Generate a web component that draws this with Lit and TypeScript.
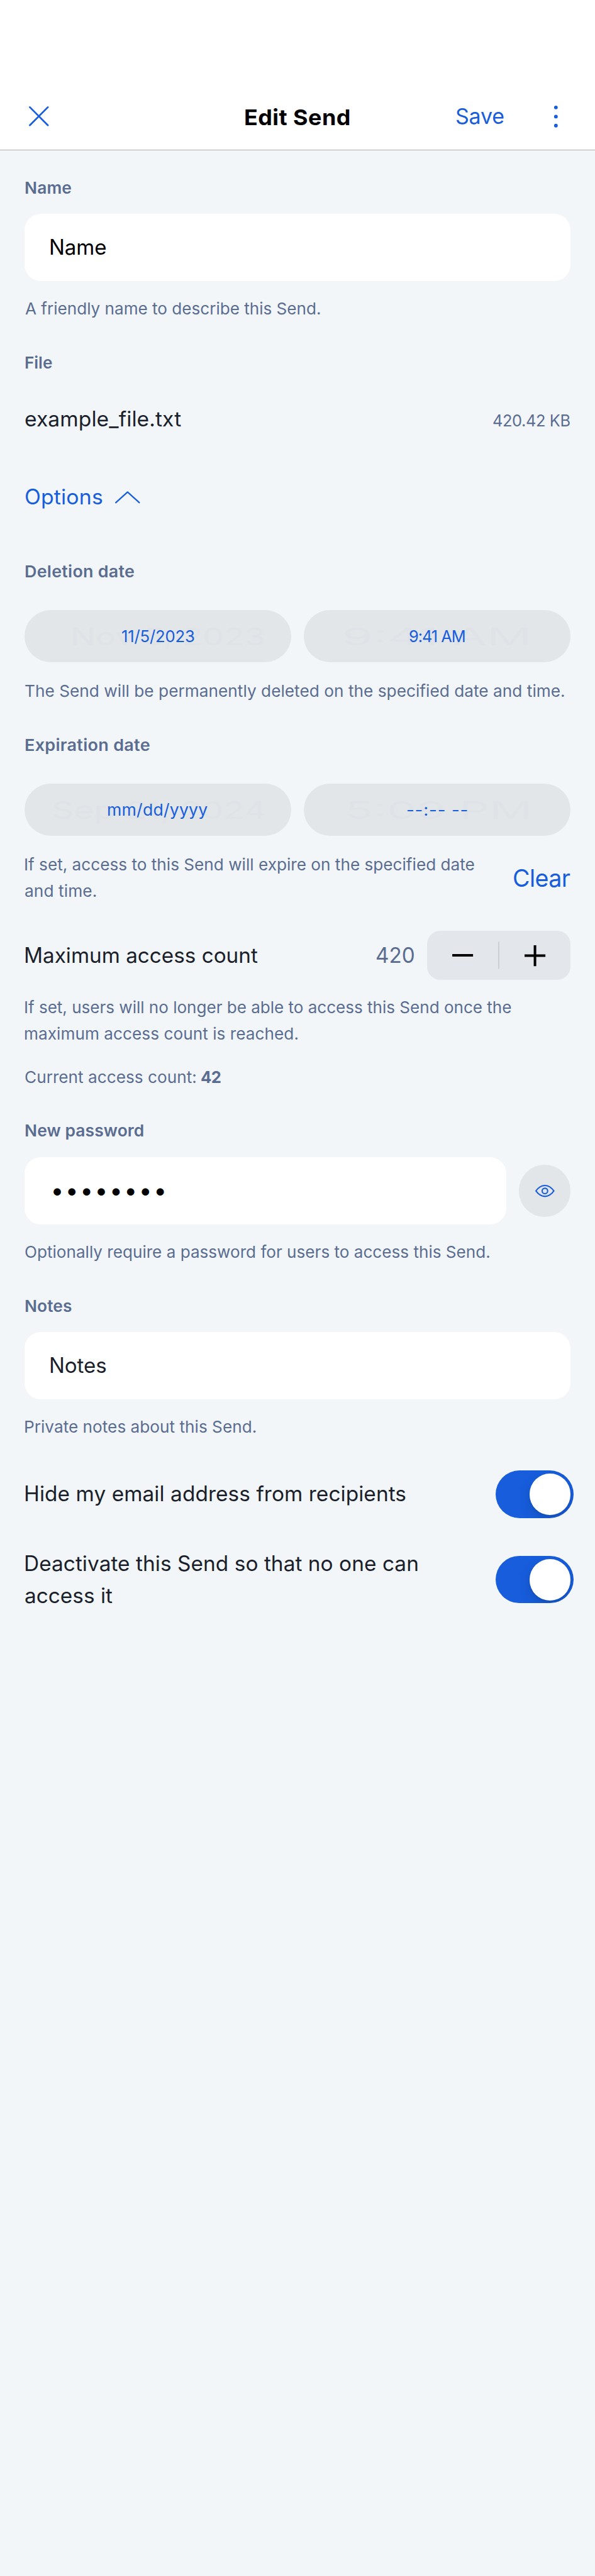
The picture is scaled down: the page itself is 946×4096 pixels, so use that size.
import { LitElement, html, css, svg, unsafeCSS } from "lit";
import { customElement, property } from "lit/decorators.js";
import { styleMap } from "lit/directives/style-map.js";

// Design units (1170 wide artboard) to CSS pixels.
const S = 946 / 1170;
const u = (n: number) => unsafeCSS(`${(n * S).toFixed(3)}px`);
const FAMILY = 'Inter, "Open Sans", sans-serif';
const SMALL = 32.4;
const BODY = 41.2;
const ctx = document.createElement("canvas").getContext("2d")!;

/** One line of text whose visible ink spans exactly `w` design units. */
@customElement("fit-text")
class FitText extends LitElement {
  @property() text = "";
  @property({ type: Number }) w = 100;
  @property({ type: Number }) size = SMALL;
  @property({ type: Number }) weight = 400;
  @property({ type: Boolean }) stretch = false;

  static styles = css`
    :host { display: block; flex: none; white-space: pre; }
    .box { display: flex; }
    .ink { display: block; flex: none; transform-origin: 0 50%; font-family: ${unsafeCSS(FAMILY)}; font-kerning: normal; }
  `;

  render() {
    const fs = this.size * S;
    ctx.font = `${this.weight} ${fs}px ${FAMILY}`;
    const m = ctx.measureText(this.text);
    const ink = m.actualBoundingBoxLeft + m.actualBoundingBoxRight;
    const target = this.w * S;
    const ratio = target / ink;
    // Widen the letters a little, and let the tracking take up the rest.
    let k = Math.min(1.06, Math.max(0.97, Math.pow(ratio, 0.6)));
    if (this.stretch) k = ratio;
    if (this.text.startsWith("•")) k = 1;
    const gap = (target / k - ink) / Math.max(1, this.text.length - 1);
    return html`<span class="box" style=${styleMap({ width: `${target}px` })}><span class="ink" style=${styleMap({
      fontSize: `${fs}px`,
      fontWeight: String(this.weight),
      letterSpacing: `${gap}px`,
      marginLeft: `${m.actualBoundingBoxLeft * k}px`,
      transform: k === 1 ? "none" : `scaleX(${k})`,
    })}>${this.text}</span></span>`;
  }
}

@customElement("app-root")
class AppRoot extends LitElement {
  static styles = css`
    :host { display: block; width: 946px; height: 4096px; overflow: hidden; background: #f2f6f9; color: #1b1f2b; font-family: ${unsafeCSS(FAMILY)}; }
    svg { display: block; flex: none; overflow: visible; }
    header { box-sizing: border-box; height: ${u(295)}; padding: ${u(166)} ${u(73.5)} 0 ${u(57)}; background: #fff; border-bottom: 1px solid #adadad; display: grid; grid-template-columns: ${u(426)} ${u(414)} 1fr auto; color: #000; }
    header > * { line-height: ${u(126)}; height: ${u(126)}; }
    .icon { display: flex; align-items: center; }
    .title { padding-top: ${u(2)}; }
    .blue { color: #175ddc; }
    main { padding: 0 ${u(48)}; }
    .label, .hint { color: #5a6d91; line-height: ${u(52)}; padding-left: ${u(1.5)}; }
    .label { margin-top: ${u(54)}; }
    .label.first { margin-top: ${u(48.5)}; }
    .label.dates { margin-top: ${u(88.7)}; }
    .hint { margin-top: ${u(28.5)}; }
    .hint.under { margin-top: ${u(30.8)}; }
    .hint.limit { margin-top: ${u(28.2)}; }
    .hint.count { margin-top: ${u(33.3)}; display: flex; gap: ${u(11)}; }
    .field { box-sizing: border-box; height: ${u(132)}; border-radius: ${u(32)}; background: #fff; padding-left: ${u(50.5)}; line-height: ${u(132)}; flex: 1; }
    .solo { margin-top: ${u(25.5)}; }
    .black { color: #000; }
    .file { margin-top: ${u(53.6)}; height: ${u(63)}; display: flex; justify-content: space-between; align-items: baseline; line-height: ${u(63)}; padding: 0 ${u(2)} 0 ${u(1)}; }
    .muted { color: #5a6d91; }
    .options { margin-top: ${u(90.7)}; display: flex; align-items: center; gap: ${u(26)}; line-height: ${u(63)}; padding-left: ${u(1.5)}; }
    .pills { margin-top: ${u(49.5)}; display: flex; gap: ${u(24)}; }
    .pill { position: relative; flex: 1; height: ${u(102.7)}; border-radius: ${u(52)}; background: #e2e6e9; display: flex; align-items: center; justify-content: center; line-height: ${u(102.7)}; color: #175ddc; }
    .pill fit-text { position: relative; }
    .pill .ghost { position: absolute; top: 0; color: #dfe3e7; }
    .g1 { left: ${u(95.6)}; } .g2 { left: ${u(81)}; } .g3 { left: ${u(56.5)}; } .g4 { left: ${u(85)}; }
    .row { display: flex; justify-content: space-between; align-items: center; }
    .row .hint { margin: 0; }
    .expiry { margin-top: ${u(30.8)}; padding-right: ${u(1.5)}; }
    .stepper-row { margin-top: ${u(52.5)}; line-height: ${u(63)}; padding-left: ${u(1.5)}; }
    .amount { display: flex; align-items: center; gap: ${u(26)}; }
    .stepper { width: ${u(282)}; height: ${u(96)}; border-radius: ${u(26)}; background: #e3e6eb; display: grid; grid-template-columns: 1fr ${u(3)} 1fr; align-items: center; justify-items: center; }
    .divider { width: ${u(3)}; height: ${u(54)}; background: #cdcfd4; border-radius: 1px; }
    .password { margin-top: ${u(25.5)}; display: flex; align-items: center; gap: ${u(24.5)}; }
    .password .field { padding-left: ${u(56.5)}; }
    .eye { width: ${u(102)}; height: ${u(102)}; border-radius: 50%; background: #e2e6e9; display: flex; align-items: center; justify-content: center; }
    .toggle-row { margin: ${u(59.8)} ${u(-6)} 0 0; padding-left: ${u(1.5)}; line-height: ${u(63)}; }
    .toggle-row.one { height: ${u(93)}; }
    .toggle-row.two { margin-top: ${u(58.5)}; }
    .toggle { box-sizing: border-box; width: ${u(153)}; height: ${u(93)}; padding: ${u(6)}; border-radius: ${u(47)}; background: #175ddc; display: flex; justify-content: flex-end; overflow: hidden; }
    .knob { width: ${u(81)}; height: ${u(81)}; border-radius: 50%; background: #fff; box-shadow: 0 ${u(9)} ${u(24)} rgba(0, 0, 0, 0.15), 0 ${u(3)} ${u(3)} rgba(0, 0, 0, 0.06); }
  `;

  private t(text: string, w: number, size = SMALL, weight = 400, cls = "", stretch = false) {
    return html`<fit-text class=${cls} .text=${text} .w=${w} .size=${size} .weight=${weight} .stretch=${stretch}></fit-text>`;
  }

  private icon(w: number, h: number, body: unknown) {
    return html`<svg width=${w * S} height=${h * S} viewBox="0 0 ${w} ${h}" fill="none" stroke="#175ddc" stroke-linecap="round" stroke-linejoin="round">${body}</svg>`;
  }

  private pill(text: string, w: number, ghost: string, gw: number, cls: string) {
    return html`<div class="pill">${this.t(ghost, gw, 48, 400, `ghost ${cls}`, true)}${this.t(text, w)}</div>`;
  }

  private toggle() {
    return html`<div class="toggle"><div class="knob"></div></div>`;
  }

  render() {
    return html`
      <header>
        <div class="icon">${this.icon(39, 39, svg`<path d="M1.7 1.7 37.3 37.3M37.3 1.7 1.7 37.3" stroke-width="3.4"/>`)}</div>
        <div class="title">${this.t("Edit Send", 204.5, 43, 700)}</div>
        <div class="blue">${this.t("Save", 94, 42.5)}</div>
        <div class="icon">${this.icon(7, 43, svg`<g fill="#175ddc" stroke="none"><circle cx="3.5" cy="3.5" r="3.6"/><circle cx="3.5" cy="21.5" r="3.6"/><circle cx="3.5" cy="39.3" r="3.6"/></g>`)}</div>
      </header>
      <main>
        <div class="label first">${this.t("Name", 90.8, SMALL, 600)}</div>
        <div class="field solo black">${this.t("Name", 109, BODY)}</div>
        <div class="hint">${this.t("A friendly name to describe this Send.", 580)}</div>

        <div class="label">${this.t("File", 53, SMALL, 600)}</div>
        <div class="file">${this.t("example_file.txt", 307, BODY)}<div class="muted">${this.t("420.42 KB", 151)}</div></div>

        <div class="options blue">${this.t("Options", 151, BODY)}${this.icon(49, 24, svg`<path d="M1.5 22.5 24.5 1.8 47.5 22.5" stroke-width="2.8"/>`)}</div>

        <div class="label dates">${this.t("Deletion date", 214.5, SMALL, 600)}</div>
        <div class="pills">
          ${this.pill("11/5/2023", 142, "Nov 5, 2023", 374.5, "g1")}
          ${this.pill("9:41 AM", 109, "9:41 AM", 360.5, "g2")}
        </div>
        <div class="hint under">${this.t("The Send will be permanently deleted on the specified date and time.", 1060)}</div>

        <div class="label">${this.t("Expiration date", 245, SMALL, 600)}</div>
        <div class="pills">
          ${this.pill("mm/dd/yyyy", 196, "Sep 21, 2024", 415.5, "g3")}
          ${this.pill("--:-- --", 119, "5:09 PM", 356.5, "g4")}
        </div>
        <div class="row expiry">
          <div class="hint">
            ${this.t("If set, access to this Send will expire on the specified date", 882.5)}
            ${this.t("and time.", 139.5)}
          </div>
          <div class="blue">${this.t("Clear", 110.5, 48)}</div>
        </div>

        <div class="row stepper-row">
          ${this.t("Maximum access count", 457.5, BODY)}
          <div class="amount">
            <div class="muted">${this.t("420", 75, BODY)}</div>
            <div class="stepper">
              ${this.icon(41, 5, svg`<path d="M0 2.5H41" stroke="#000" stroke-width="5" stroke-linecap="butt"/>`)}
              <div class="divider"></div>
              ${this.icon(41, 41, svg`<path d="M0 20.5H41M20.5 0V41" stroke="#000" stroke-width="5" stroke-linecap="butt"/>`)}
            </div>
          </div>
        </div>
        <div class="hint limit">
          ${this.t("If set, users will no longer be able to access this Send once the", 955)}
          ${this.t("maximum access count is reached.", 536)}
        </div>
        <div class="hint count">${this.t("Current access count:", 335.5)}${this.t("42", 39, SMALL, 700)}</div>

        <div class="label">${this.t("New password", 232.5, SMALL, 600)}</div>
        <div class="password">
          <div class="field black">${this.t("••••••••", 218.5, 46)}</div>
          <div class="eye">${this.icon(38, 24, svg`<path d="M1.3 12C6 5.6 12 1.3 19 1.3S32 5.6 36.7 12C32 18.4 26 22.7 19 22.7S6 18.4 1.3 12Z" stroke-width="2.6"/><circle cx="19" cy="12" r="5.4" stroke-width="2.6"/>`)}</div>
        </div>
        <div class="hint">${this.t("Optionally require a password for users to access this Send.", 913)}</div>

        <div class="label">${this.t("Notes", 91.5, SMALL, 600)}</div>
        <div class="field solo">${this.t("Notes", 109, BODY)}</div>
        <div class="hint">${this.t("Private notes about this Send.", 453.5)}</div>

        <div class="row toggle-row one">${this.t("Hide my email address from recipients", 747.5, BODY)}${this.toggle()}</div>
        <div class="row toggle-row two">
          <div>
            ${this.t("Deactivate this Send so that no one can", 772, BODY)}
            ${this.t("access it", 172, BODY)}
          </div>
          ${this.toggle()}
        </div>
      </main>
    `;
  }
}
